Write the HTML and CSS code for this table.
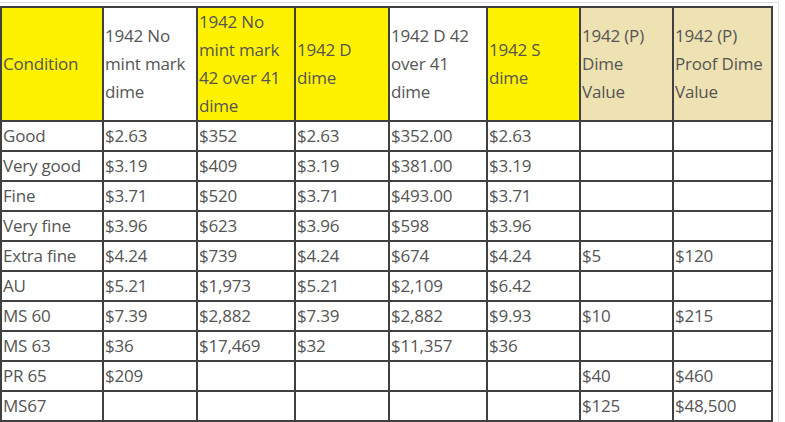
FILE: index.html
```html
<!DOCTYPE html>
<html>
<head>
<meta charset="utf-8">
<link rel="stylesheet" href="styles.css">
</head>
<body>
<div class="wrap">
<table class="prices">
<colgroup>
<col class="c1"><col class="c2"><col class="c3"><col class="c4"><col class="c5"><col class="c6"><col class="c7"><col class="c8">
</colgroup>
<thead>
<tr>
<th class="y">Condition</th>
<th>1942 No<br>mint mark<br>dime</th>
<th class="y">1942 No<br>mint mark<br>42 over 41<br>dime</th>
<th class="y">1942 D<br>dime</th>
<th>1942 D 42<br>over 41<br>dime</th>
<th class="y">1942 S<br>dime</th>
<th class="t">1942 (P)<br>Dime<br>Value</th>
<th class="t">1942 (P)<br>Proof Dime<br>Value</th>
</tr>
</thead>
<tbody>
<tr><td>Good</td><td>$2.63</td><td>$352</td><td>$2.63</td><td>$352.00</td><td>$2.63</td><td></td><td></td></tr>
<tr><td>Very good</td><td>$3.19</td><td>$409</td><td>$3.19</td><td>$381.00</td><td>$3.19</td><td></td><td></td></tr>
<tr><td>Fine</td><td>$3.71</td><td>$520</td><td>$3.71</td><td>$493.00</td><td>$3.71</td><td></td><td></td></tr>
<tr><td>Very fine</td><td>$3.96</td><td>$623</td><td>$3.96</td><td>$598</td><td>$3.96</td><td></td><td></td></tr>
<tr><td>Extra fine</td><td>$4.24</td><td>$739</td><td>$4.24</td><td>$674</td><td>$4.24</td><td>$5</td><td>$120</td></tr>
<tr><td>AU</td><td>$5.21</td><td>$1,973</td><td>$5.21</td><td>$2,109</td><td>$6.42</td><td></td><td></td></tr>
<tr><td>MS 60</td><td>$7.39</td><td>$2,882</td><td>$7.39</td><td>$2,882</td><td>$9.93</td><td>$10</td><td>$215</td></tr>
<tr><td>MS 63</td><td>$36</td><td>$17,469</td><td>$32</td><td>$11,357</td><td>$36</td><td></td><td></td></tr>
<tr><td>PR 65</td><td>$209</td><td></td><td></td><td></td><td></td><td>$40</td><td>$460</td></tr>
<tr><td>MS67</td><td></td><td></td><td></td><td></td><td></td><td>$125</td><td>$48,500</td></tr>
</tbody>
</table>
</div>
</body>
</html>
```

FILE: styles.css
```css
html, body {
  margin: 0;
  padding: 0;
  background: #ffffff;
}
body {
  font-family: "Open Sans", "Noto Sans", sans-serif;
  color: #555555;
}
.wrap {
  margin-top: 2px;
  width: 779px;
  height: 430px;
  border-top: 1px solid #dcdcdc;
  border-right: 1px solid #dcdcdc;
  padding-top: 3px;
  box-sizing: border-box;
}
.prices {
  border-collapse: collapse;
  table-layout: fixed;
  width: 771px;
  font-size: 17px;
  line-height: 28px;
  letter-spacing: -0.2px;
}
.prices th,
.prices td {
  border: 2px solid #404040;
  padding: 0 0 0 1px;
  text-align: left;
  font-weight: normal;
  white-space: nowrap;
  overflow: hidden;
}
.prices th {
  vertical-align: middle;
}
.prices td {
  height: 28px;
  vertical-align: middle;
}
.prices .y { background: #fff200; }
.prices .t { background: #eee2b3; }
.c1 { width: 102px; }
.c2 { width: 94px; }
.c3 { width: 98px; }
.c4 { width: 94px; }
.c5 { width: 98px; }
.c6 { width: 93px; }
.c7 { width: 93px; }
.c8 { width: 99px; }
```
